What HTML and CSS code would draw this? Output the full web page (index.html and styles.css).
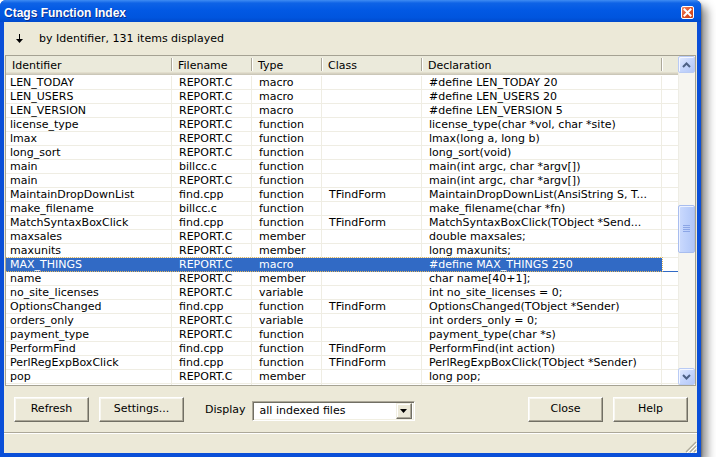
FILE: index.html
```html
<!DOCTYPE html>
<html>
<head>
<meta charset="utf-8">
<link rel="stylesheet" href="styles.css">
</head>
<body>
<div class="window">
  <div class="titlebar">
    <span class="title">Ctags Function Index</span>
    <span class="close"><svg width="11" height="11" viewBox="0 0 11 11"><path d="M2.5 2.5 L8.5 8.5 M8.5 2.5 L2.5 8.5" stroke="#fff" stroke-width="2" stroke-linecap="square"/></svg></span>
  </div>
  <div class="client">
    <div class="toolbar">
      <svg class="sort-arrow" width="7" height="9" viewBox="0 0 7 9"><path d="M3 0h1v5H3z" fill="#000"/><path d="M0 5h7L3.5 9z" fill="#000"/></svg>
      <span>by Identifier, 131 items displayed</span>
    </div>
    <div class="list">
      <div class="data">
        <div class="header">
          <div class="hcell c1 first">Identifier</div>
          <div class="hcell c2">Filename</div>
          <div class="hcell c3">Type</div>
          <div class="hcell c4">Class</div>
          <div class="hcell c5">Declaration</div>
          <div class="hfill"></div>
        </div>
        <div class="row"><div class="cells"><span class="c1">LEN_TODAY</span><span class="c2">REPORT.C</span><span class="c3">macro</span><span class="c4"></span><span class="c5">#define LEN_TODAY 20</span></div><div class="fill"></div></div>
        <div class="row"><div class="cells"><span class="c1">LEN_USERS</span><span class="c2">REPORT.C</span><span class="c3">macro</span><span class="c4"></span><span class="c5">#define LEN_USERS 20</span></div><div class="fill"></div></div>
        <div class="row"><div class="cells"><span class="c1">LEN_VERSION</span><span class="c2">REPORT.C</span><span class="c3">macro</span><span class="c4"></span><span class="c5">#define LEN_VERSION 5</span></div><div class="fill"></div></div>
        <div class="row"><div class="cells"><span class="c1">license_type</span><span class="c2">REPORT.C</span><span class="c3">function</span><span class="c4"></span><span class="c5">license_type(char *vol, char *site)</span></div><div class="fill"></div></div>
        <div class="row"><div class="cells"><span class="c1">lmax</span><span class="c2">REPORT.C</span><span class="c3">function</span><span class="c4"></span><span class="c5">lmax(long a, long b)</span></div><div class="fill"></div></div>
        <div class="row"><div class="cells"><span class="c1">long_sort</span><span class="c2">REPORT.C</span><span class="c3">function</span><span class="c4"></span><span class="c5">long_sort(void)</span></div><div class="fill"></div></div>
        <div class="row"><div class="cells"><span class="c1">main</span><span class="c2">billcc.c</span><span class="c3">function</span><span class="c4"></span><span class="c5">main(int argc, char *argv[])</span></div><div class="fill"></div></div>
        <div class="row"><div class="cells"><span class="c1">main</span><span class="c2">REPORT.C</span><span class="c3">function</span><span class="c4"></span><span class="c5">main(int argc, char *argv[])</span></div><div class="fill"></div></div>
        <div class="row"><div class="cells"><span class="c1">MaintainDropDownList</span><span class="c2">find.cpp</span><span class="c3">function</span><span class="c4">TFindForm</span><span class="c5">MaintainDropDownList(AnsiString S, T...</span></div><div class="fill"></div></div>
        <div class="row"><div class="cells"><span class="c1">make_filename</span><span class="c2">billcc.c</span><span class="c3">function</span><span class="c4"></span><span class="c5">make_filename(char *fn)</span></div><div class="fill"></div></div>
        <div class="row"><div class="cells"><span class="c1">MatchSyntaxBoxClick</span><span class="c2">find.cpp</span><span class="c3">function</span><span class="c4">TFindForm</span><span class="c5">MatchSyntaxBoxClick(TObject *Send...</span></div><div class="fill"></div></div>
        <div class="row"><div class="cells"><span class="c1">maxsales</span><span class="c2">REPORT.C</span><span class="c3">member</span><span class="c4"></span><span class="c5">double maxsales;</span></div><div class="fill"></div></div>
        <div class="row"><div class="cells"><span class="c1">maxunits</span><span class="c2">REPORT.C</span><span class="c3">member</span><span class="c4"></span><span class="c5">long maxunits;</span></div><div class="fill"></div></div>
        <div class="row selected"><div class="cells"><span class="c1">MAX_THINGS</span><span class="c2">REPORT.C</span><span class="c3">macro</span><span class="c4"></span><span class="c5">#define MAX_THINGS 250</span></div><div class="fill"></div></div>
        <div class="row"><div class="cells"><span class="c1">name</span><span class="c2">REPORT.C</span><span class="c3">member</span><span class="c4"></span><span class="c5">char name[40+1];</span></div><div class="fill"></div></div>
        <div class="row"><div class="cells"><span class="c1">no_site_licenses</span><span class="c2">REPORT.C</span><span class="c3">variable</span><span class="c4"></span><span class="c5">int no_site_licenses = 0;</span></div><div class="fill"></div></div>
        <div class="row"><div class="cells"><span class="c1">OptionsChanged</span><span class="c2">find.cpp</span><span class="c3">function</span><span class="c4">TFindForm</span><span class="c5">OptionsChanged(TObject *Sender)</span></div><div class="fill"></div></div>
        <div class="row"><div class="cells"><span class="c1">orders_only</span><span class="c2">REPORT.C</span><span class="c3">variable</span><span class="c4"></span><span class="c5">int orders_only = 0;</span></div><div class="fill"></div></div>
        <div class="row"><div class="cells"><span class="c1">payment_type</span><span class="c2">REPORT.C</span><span class="c3">function</span><span class="c4"></span><span class="c5">payment_type(char *s)</span></div><div class="fill"></div></div>
        <div class="row"><div class="cells"><span class="c1">PerformFind</span><span class="c2">find.cpp</span><span class="c3">function</span><span class="c4">TFindForm</span><span class="c5">PerformFind(int action)</span></div><div class="fill"></div></div>
        <div class="row"><div class="cells"><span class="c1">PerlRegExpBoxClick</span><span class="c2">find.cpp</span><span class="c3">function</span><span class="c4">TFindForm</span><span class="c5">PerlRegExpBoxClick(TObject *Sender)</span></div><div class="fill"></div></div>
        <div class="row"><div class="cells"><span class="c1">pop</span><span class="c2">REPORT.C</span><span class="c3">member</span><span class="c4"></span><span class="c5">long pop;</span></div><div class="fill"></div></div>
        <div class="row"><div class="cells"><span class="c1"></span><span class="c2"></span><span class="c3"></span><span class="c4"></span><span class="c5"></span></div><div class="fill"></div></div>
      </div>
      <div class="vscroll">
        <div class="sbtn"><svg width="9" height="6" viewBox="0 0 9 6"><path d="M1 5 L4.5 1.5 L8 5" fill="none" stroke="#4D6185" stroke-width="2"/></svg></div>
        <div class="thumb"><svg width="7" height="8" viewBox="0 0 7 8"><path d="M0 .5h7M0 2.5h7M0 4.5h7M0 6.5h7" stroke="#8CA6E6" stroke-width="1"/></svg></div>
        <div class="track"></div>
        <div class="sbtn"><svg width="9" height="6" viewBox="0 0 9 6"><path d="M1 1 L4.5 4.5 L8 1" fill="none" stroke="#4D6185" stroke-width="2"/></svg></div>
      </div>
    </div>
    <div class="buttons">
      <div class="btn refresh">Refresh</div>
      <div class="btn settings">Settings...</div>
      <span class="label">Display</span>
      <div class="combo">
        <span class="combo-text">all indexed files</span>
        <span class="combo-btn"><svg width="7" height="4" viewBox="0 0 7 4"><path d="M0 0h7L3.5 4z" fill="#000"/></svg></span>
      </div>
      <div class="btn close-btn">Close</div>
      <div class="btn help">Help</div>
    </div>
    <div class="status">
      <svg class="grip" width="12" height="12" viewBox="0 0 12 12">
        <path d="M11 1 L1 11 M11 5 L5 11 M11 9 L9 11" stroke="#ACA899" stroke-width="1.2"/>
        <path d="M12 2 L2 12 M12 6 L6 12 M12 10 L10 12" stroke="#fff" stroke-width="1"/>
      </svg>
    </div>
  </div>
</div>
</body>
</html>
```

FILE: styles.css
```css
* { box-sizing: border-box; }

html, body {
  margin: 0;
  padding: 0;
  background: #ffffff;
}

body {
  font-family: "DejaVu Sans", Verdana, sans-serif;
  font-size: 11px;
  color: #000;
}

.window {
  width: 701px;
  height: 457px;
  display: flex;
  flex-direction: column;
  background: #0A4FD8;
  border-radius: 6px 6px 0 0;
  box-shadow: 6px 6px 10px rgba(0, 0, 0, 0.45), 1px 1px 2px rgba(0,0,0,0.3);
}

.titlebar {
  height: 22px;
  flex: none;
  display: flex;
  align-items: center;
  padding: 0 7px 0 4px;
  border-radius: 6px 6px 0 0;
  background: linear-gradient(to bottom, #3F8CF3 0%, #0E63E6 14%, #0259E4 45%, #0055DE 80%, #0049CC 100%);
}

.title {
  font-family: "Liberation Sans", Arial, sans-serif;
  font-weight: bold;
  font-size: 12px;
  color: #fff;
  text-shadow: 1px 1px 0 #0A2F8E;
  padding-top: 4px;
}

.close {
  margin-left: auto;
  width: 13px;
  height: 13px;
  margin-top: 3px;
  border: 1px solid #fff;
  border-radius: 2px;
  background: linear-gradient(135deg, #F08A6C 0%, #E0552B 45%, #C8401B 100%);
  display: flex;
  align-items: center;
  justify-content: center;
}

.close svg { display: block; }

.client {
  flex: 1;
  margin: 0 4px 4px 4px;
  background: #ECE9D8;
  display: flex;
  flex-direction: column;
}

.toolbar {
  height: 33px;
  flex: none;
  display: flex;
  align-items: center;
  padding: 0 0 0 12px;
}

.sort-arrow {
  display: block;
  margin-right: 16px;
}

.list {
  height: 331px;
  flex: none;
  margin: 0 1px;
  border: 1px solid #A5A293;
  background: #fff;
  display: flex;
  overflow: hidden;
}

.data {
  flex: 1;
  overflow: hidden;
}

.header {
  display: flex;
  height: 19px;
  margin-bottom: 1px;
  background: #EBEADB;
  box-shadow: inset 0 -1px #CBC7B8, inset 0 -2px #D6D2C2, inset 0 -3px #E2DECD;
}

.hcell {
  height: 19px;
  line-height: 19px;
  padding-left: 6px;
  white-space: nowrap;
  position: relative;
}

.hcell::after {
  content: "";
  position: absolute;
  right: 0;
  top: 2px;
  bottom: 4px;
  width: 1px;
  background: #ACA899;
  box-shadow: 1px 0 #fff;
}

.hfill { flex: 1; }

.c1 { width: 166px; }
.c2 { width: 80px; }
.c3 { width: 70px; }
.c4 { width: 100px; }
.c5 { width: 240px; }

.row {
  display: flex;
  height: 14px;
  border-bottom: 1px solid #EFEDE3;
}

.cells {
  display: flex;
  height: 13px;
}

.cells span {
  display: block;
  height: 13px;
  line-height: 14px;
  padding-left: 7px;
  border-right: 1px solid #EFEDE3;
  white-space: nowrap;
  overflow: hidden;
}

.cells span.c1 { padding-left: 4px; }

.fill { flex: 1; }

.row.selected {
  border-bottom-color: #316AC5;
}

.row.selected .cells {
  background: #316AC5;
  color: #fff;
  outline: 1px dotted #E0B860;
  outline-offset: 0;
}

.row.selected .cells span {
  border-right-color: #316AC5;
}

.vscroll {
  width: 17px;
  flex: none;
  display: flex;
  flex-direction: column;
  background: #F6F5F0;
  box-shadow: inset 1px 0 #EEEDE5;
}

.sbtn {
  width: 17px;
  height: 17px;
  flex: none;
  border: 1px solid #B9CBF5;
  border-radius: 2px;
  background: linear-gradient(135deg, #E3EBFE 0%, #C6D6FC 50%, #B4C8F8 100%);
  display: flex;
  align-items: center;
  justify-content: center;
  box-shadow: inset 1px 1px #F4F7FF;
}

.sbtn svg { display: block; }

.thumb {
  width: 17px;
  height: 48px;
  flex: none;
  margin-top: 132px;
  border: 1px solid #A8BDEF;
  border-radius: 2px;
  background: linear-gradient(to right, #CBDAFD 0%, #BDD0FB 50%, #B2C7F7 100%);
  display: flex;
  align-items: center;
  justify-content: center;
  box-shadow: inset 1px 1px #EDF2FF;
}

.thumb svg { display: block; }

.track { flex: 1; }

.buttons {
  height: 46px;
  flex: none;
  display: flex;
  align-items: flex-start;
  padding: 11px 9px 0 10px;
}

.btn {
  height: 25px;
  line-height: 22px;
  text-align: center;
  background: #ECE9D8;
  border: 1px solid;
  border-color: #FFFFFF #716F64 #716F64 #FFFFFF;
  box-shadow: inset -1px -1px #ACA899, inset 1px 1px #F8F7F1;
}

.refresh { width: 75px; }
.settings { width: 85px; margin-left: 10px; }
.close-btn { width: 75px; margin-left: auto; }
.help { width: 75px; margin-left: 10px; }

.label {
  margin-left: 21px;
  line-height: 25px;
}

.combo {
  margin-left: 6px;
  margin-top: 4px;
  width: 163px;
  height: 20px;
  background: #fff;
  border: 1px solid;
  border-color: #ACA899 #FFFFFF #FFFFFF #ACA899;
  box-shadow: inset 1px 1px #716F64, inset -1px -1px #F1EFE2;
  display: flex;
  align-items: center;
  padding: 1px 2px 1px 2px;
}

.combo-text {
  flex: 1;
  padding-left: 5px;
  line-height: 16px;
}

.combo-btn {
  width: 16px;
  height: 16px;
  background: #ECE9D8;
  border: 1px solid;
  border-color: #F1EFE2 #716F64 #716F64 #F1EFE2;
  box-shadow: inset -1px -1px #ACA899, inset 1px 1px #fff;
  display: flex;
  align-items: center;
  justify-content: center;
}

.combo-btn svg { display: block; }

.status {
  height: 21px;
  flex: none;
  border-top: 1px solid #ACA899;
  box-shadow: inset 0 1px #fff;
  display: flex;
  justify-content: flex-end;
  align-items: flex-end;
}

.grip { display: block; }
```
